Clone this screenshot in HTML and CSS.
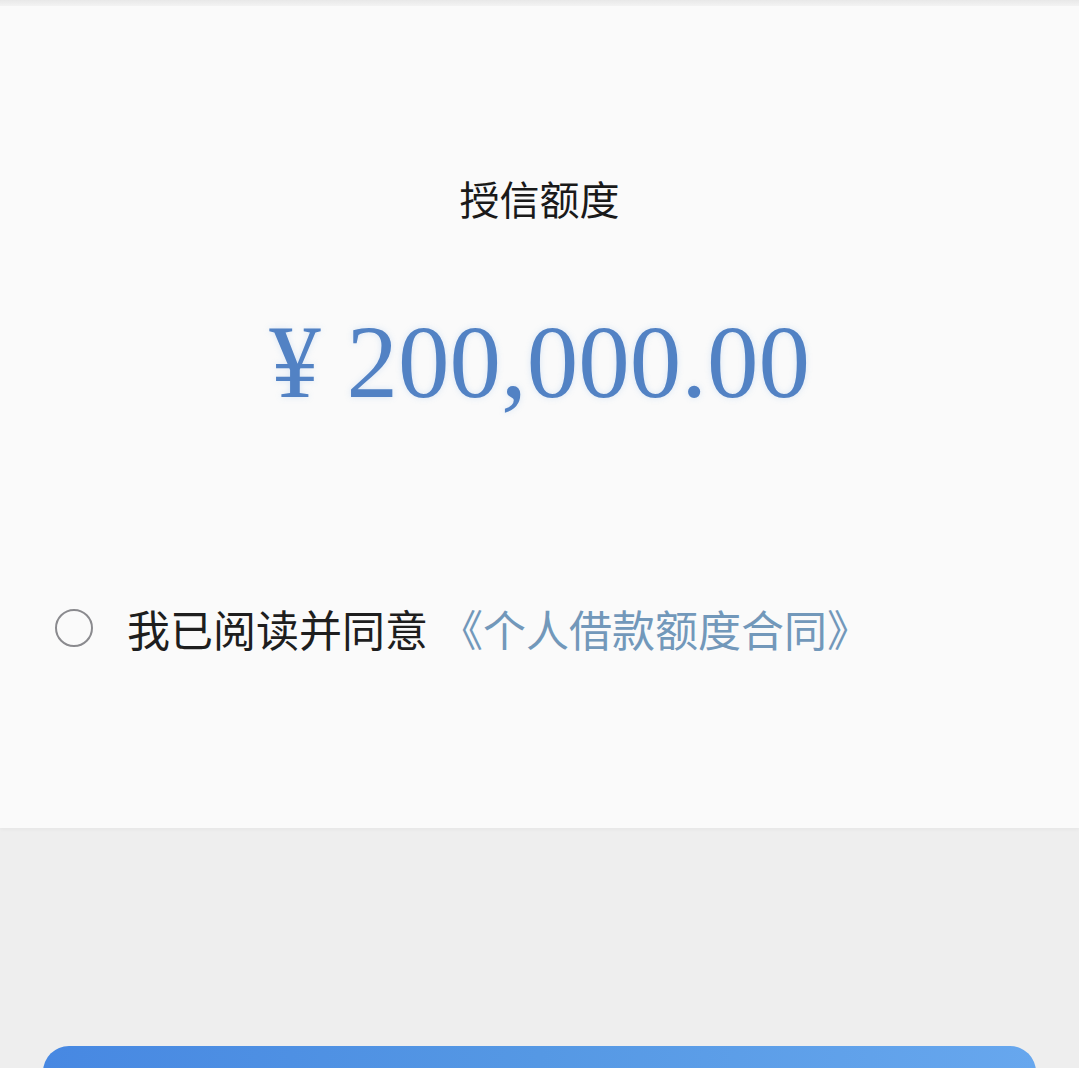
FILE: index.html
```html
<!DOCTYPE html>
<html lang="zh-CN">
<head>
    <meta charset="UTF-8">
    <meta name="viewport" content="width=device-width, initial-scale=1.0">
    <title>授信额度</title>
    <link rel="stylesheet" href="styles.css">
</head>
<body>
    <div class="top-strip"></div>
    <div class="card">
        <h1 class="title">授信额度</h1>
        <div class="amount">¥ 200,000.00</div>
        <label class="agree">
            <input type="checkbox" hidden>
            <span class="radio"></span>
            <span class="agree-text">我已阅读并同意</span>
            <a class="contract" href="#">《个人借款额度合同》</a>
        </label>
    </div>
    <div class="footer">
        <button class="submit"></button>
    </div>
</body>
</html>
```

FILE: styles.css
```css
body {
    margin: 0;
    background: #eeeeee;
    font-family: "Noto Sans CJK SC", "Noto Sans", sans-serif;
}
.top-strip {
    height: 6px;
    background: linear-gradient(#e8e8e8, #f3f3f3);
}
.card {
    background: #fafafa;
    padding: 164px 0 170px;
    box-shadow: 0 2px 3px rgba(0, 0, 0, 0.03);
}
.title {
    margin: 0;
    text-align: center;
    font-size: 40px;
    font-weight: normal;
    line-height: 56px;
    color: #1a1a1a;
}
.amount {
    margin-top: 76px;
    text-align: center;
    font-family: "Liberation Serif", "Times New Roman", serif;
    font-size: 103px;
    line-height: 120px;
    color: #5282c4;
    text-shadow: 0 0 6px rgba(120, 170, 230, 0.25);
}
.agree {
    display: flex;
    align-items: center;
    height: 60px;
    margin-top: 176px;
    padding-left: 55px;
    cursor: pointer;
}
.radio {
    width: 34px;
    height: 34px;
    border: 2px solid #8a8a8e;
    border-radius: 50%;
    box-sizing: content-box;
    margin-right: 34px;
}
.agree-text {
    font-size: 43px;
    color: #1e1e1e;
}
.contract {
    margin-left: 12px;
    font-size: 43px;
    color: #7298ba;
    text-decoration: none;
}
.footer {
    padding: 218px 43px 0;
}
.submit {
    display: block;
    width: 100%;
    height: 100px;
    border: none;
    border-radius: 26px;
    background: linear-gradient(90deg, #4788e2, #5598e4 50%, #67a7ee);
}
```
